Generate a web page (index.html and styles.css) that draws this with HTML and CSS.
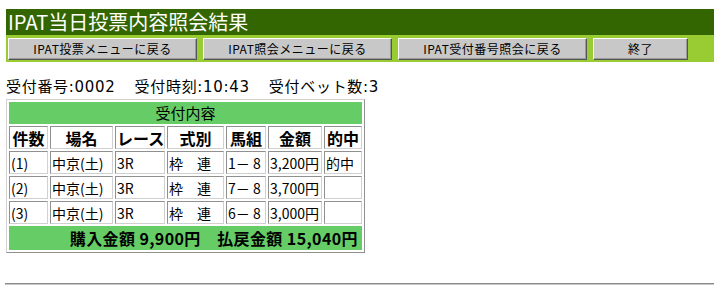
FILE: index.html
```html
<!DOCTYPE html>
<html lang="ja">
<head>
<meta charset="utf-8">
<title>IPAT当日投票内容照会結果</title>
<link rel="stylesheet" href="styles.css">
</head>
<body>
<div class="page">
  <div class="titlebar">IPAT当日投票内容照会結果</div>
  <div class="navbar">
    <button class="btn">IPAT投票メニューに戻る</button>
    <button class="btn">IPAT照会メニューに戻る</button>
    <button class="btn">IPAT受付番号照会に戻る</button>
    <button class="btn btn-small">終了</button>
  </div>
  <div class="info"><span>受付番号:0002</span><span>受付時刻:10:43</span><span>受付ベット数:3</span></div>
  <table class="result">
    <colgroup>
      <col class="c1"><col class="c2"><col class="c3"><col class="c4"><col class="c5"><col class="c6"><col class="c7">
    </colgroup>
    <tr><td class="caption" colspan="7">受付内容</td></tr>
    <tr class="head">
      <th>件数</th><th>場名</th><th>レース</th><th>式別</th><th>馬組</th><th>金額</th><th>的中</th>
    </tr>
    <tr>
      <td>(1)</td><td>中京(土)</td><td>3R</td><td>枠　連</td><td class="num">1－ 8</td><td>3,200円</td><td>的中</td>
    </tr>
    <tr>
      <td>(2)</td><td>中京(土)</td><td>3R</td><td>枠　連</td><td class="num">7－ 8</td><td>3,700円</td><td></td>
    </tr>
    <tr>
      <td>(3)</td><td>中京(土)</td><td>3R</td><td>枠　連</td><td class="num">6－ 8</td><td>3,000円</td><td></td>
    </tr>
    <tr><td class="total" colspan="7">購入金額 9,900円　払戻金額 15,040円</td></tr>
  </table>
  <hr class="rule">
</div>
</body>
</html>
```
FILE: styles.css
```css
html, body {
  margin: 0;
  padding: 0;
  background: #ffffff;
}

.page {
  padding: 9px 2px 0 6px;
  font-family: "Noto Sans CJK JP", "DejaVu Sans", sans-serif;
  color: #000;
}

.titlebar {
  background: #336600;
  color: #ffffff;
  font-size: 20px;
  height: 26px;
  line-height: 26px;
  padding-left: 2px;
  white-space: nowrap;
}

.navbar {
  background: #99cc33;
  height: 27px;
  box-sizing: border-box;
  padding: 3px 2px 0 2px;
  display: flex;
  gap: 6px;
}

.btn {
  width: 189px;
  height: 22px;
  box-sizing: border-box;
  background: #c8c8c8;
  border: 1px solid;
  border-color: #ffffff #555555 #555555 #ffffff;
  box-shadow: inset -1px -1px 0 #999999;
  font-family: "Noto Sans CJK JP", sans-serif;
  font-size: 12px;
  line-height: 18px;
  padding: 0;
  color: #000;
  letter-spacing: 0.5px;
}

.btn-small {
  width: 95px;
}

.info {
  margin-top: 15px;
  font-family: "DejaVu Sans", "Noto Sans CJK JP", sans-serif;
  font-size: 15px;
  line-height: 20px;
  height: 20px;
  white-space: nowrap;
  letter-spacing: 0.7px;
  display: flex;
  gap: 19px;
}

.result {
  margin-top: 2px;
  width: 359px;
  box-sizing: border-box;
  table-layout: fixed;
  border-collapse: separate;
  border-spacing: 2px;
  border: 1px solid;
  border-color: #d0d0d0 #909090 #909090 #d0d0d0;
  font-size: 14px;
}

.c1 { width: 39px; }
.c2 { width: 63px; }
.c3 { width: 50px; }
.c4 { width: 57px; }
.c5 { width: 40px; }
.c6 { width: 54px; }
.c7 { width: 38px; }

.result td, .result th {
  box-sizing: border-box;
  border: 1px solid;
  border-color: #909090 #d0d0d0 #d0d0d0 #909090;
  padding: 0 1px;
  height: 23px;
  line-height: 20px;
  white-space: nowrap;
  overflow: hidden;
  text-align: left;
}

.result .caption {
  background: #66cc66;
  border: none;
  text-align: center;
  font-size: 15px;
  height: 22px;
  padding: 0;
}

.result th {
  font-weight: bold;
  font-size: 16px;
  text-align: center;
  height: 23px;
}

.result .num {
  text-align: left;
  padding-right: 0;
}

.result .total {
  background: #66cc66;
  border: none;
  text-align: right;
  font-weight: bold;
  font-size: 16px;
  letter-spacing: 0.4px;
  height: 24px;
  padding: 0 4px 0 0;
  overflow: visible;
}

.rule {
  margin: 30px 0 0 -1px;
  border: none;
  border-top: 1px solid #8a8a8a;
  border-bottom: 1px solid #c8c8c8;
  height: 0;
}
```
